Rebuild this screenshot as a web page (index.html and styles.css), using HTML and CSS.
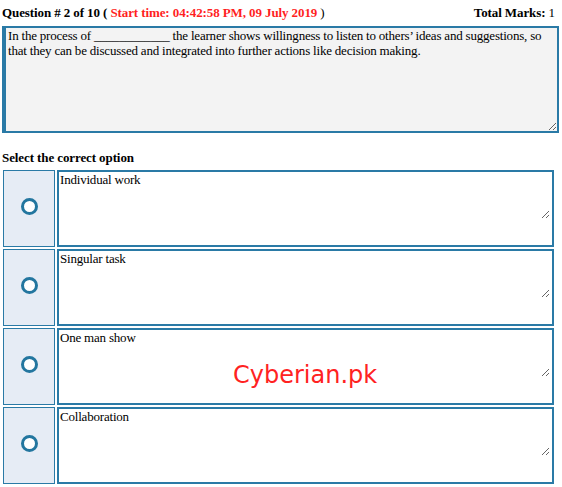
FILE: index.html
```html
<!DOCTYPE html>
<html>
<head>
<meta charset="utf-8">
<link rel="stylesheet" href="styles.css">
</head>
<body>
<div class="page">
  <div class="head">
    <div class="qnum"><b>Question # 2 of 10 ( </b><b class="time">Start time: 04:42:58 PM, 09 July 2019</b> )</div>
    <div class="marks"><b>Total Marks:</b> 1</div>
  </div>
  <textarea class="question" readonly>In the process of ____________ the learner shows willingness to listen to others’ ideas and suggestions, so that they can be discussed and integrated into further actions like decision making.</textarea>
  <div class="select">Select the correct option</div>
  <div class="options">
    <div class="opt"><div class="radio-cell"><span class="radio"></span></div><div class="answer-box"><textarea class="answer" readonly>Individual work</textarea></div></div>
    <div class="opt"><div class="radio-cell"><span class="radio"></span></div><div class="answer-box"><textarea class="answer" readonly>Singular task</textarea></div></div>
    <div class="opt"><div class="radio-cell"><span class="radio"></span></div><div class="answer-box"><textarea class="answer" readonly>One man show</textarea></div><span class="watermark">Cyberian.pk</span></div>
    <div class="opt"><div class="radio-cell"><span class="radio"></span></div><div class="answer-box"><textarea class="answer" readonly>Collaboration</textarea></div></div>
  </div>
</div>
</body>
</html>
```

FILE: styles.css
```css
html, body {
  margin: 0;
  padding: 0;
  background: #ffffff;
}
.page {
  padding: 4px 7px 0 2px;
  font-family: "Liberation Serif", "Times New Roman", serif;
  font-size: 13px;
  letter-spacing: -0.1px;
  color: #000;
}
.head {
  display: flex;
  justify-content: space-between;
  line-height: 18px;
  height: 19px;
}
.time {
  color: #ff1f1f;
}
.marks {
  color: #000;
}
.question {
  display: block;
  box-sizing: border-box;
  width: 557px;
  height: 107px;
  margin: 3px 0 0 0;
  padding: 0 2px;
  border: 2px solid #2a7aa6;
  border-left: 4px solid #2a7aa6;
  background: #f3f3f3;
  font-family: "Liberation Serif", "Times New Roman", serif;
  font-size: 13px;
  letter-spacing: -0.2px;
  line-height: 15px;
  color: #000;
  resize: both;
  outline: none;
}
.select {
  font-weight: bold;
  margin-top: 17px;
  line-height: 16px;
}
.options {
  display: flex;
  flex-direction: column;
  gap: 2px;
  margin-top: 4px;
  margin-left: 1px;
}
.opt {
  position: relative;
  display: flex;
  gap: 2px;
  height: 77px;
}
.radio-cell {
  box-sizing: border-box;
  width: 52px;
  height: 77px;
  background: #e6ecf5;
  border: 1px solid #2a7aa6;
  display: flex;
  align-items: center;
  justify-content: center;
}
.radio {
  box-sizing: border-box;
  width: 17px;
  height: 17px;
  margin-bottom: 4px;
  border: 3.5px solid #23769f;
  border-radius: 50%;
  background: #ffffff;
}
.answer-box {
  box-sizing: border-box;
  width: 497px;
  height: 77px;
  border: 2px solid #2a7aa6;
  background: #ffffff;
}
.answer {
  display: block;
  box-sizing: border-box;
  width: 491px;
  height: 47px;
  margin: 0;
  padding: 0 1px;
  border: none;
  background: transparent;
  font-family: "Liberation Serif", "Times New Roman", serif;
  font-size: 13px;
  letter-spacing: -0.2px;
  line-height: 15px;
  color: #000;
  resize: both;
  outline: none;
}
.watermark {
  position: absolute;
  left: 230px;
  top: 33px;
  font-family: "DejaVu Sans", Verdana, sans-serif;
  font-size: 24px;
  letter-spacing: 0;
  color: #ff2222;
  pointer-events: none;
}
```
